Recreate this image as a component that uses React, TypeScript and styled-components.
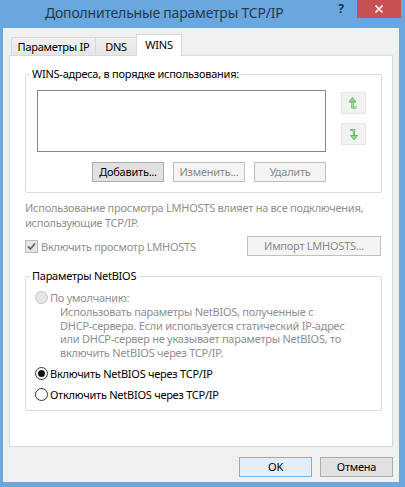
import React from "react";
import styled, { createGlobalStyle, css } from "styled-components";

const Global = createGlobalStyle`
  html, body { margin: 0; padding: 0; }
  body {
    background: #6aa7de;
    font-family: "Noto Sans", "Open Sans", sans-serif;
    font-size: 11px;
    letter-spacing: -0.25px;
    color: #000;
  }
  * { box-sizing: border-box; }
`;

const Window = styled.div`
  width: 405px;
  height: 487px;
  background: #6aa7de;
  display: flex;
  flex-direction: column;
`;

const TitleBar = styled.div`
  height: 28px;
  display: flex;
  align-items: flex-start;
`;

const Title = styled.div`
  flex: 1;
  padding-left: 45px;
  margin-top: 3px;
  font-size: 14px;
  letter-spacing: -0.2px;
  line-height: 20px;
  color: #233a52;
  white-space: nowrap;
`;

const HelpButton = styled.div`
  width: 10px;
  margin-top: 1px;
  margin-right: 11px;
  font-size: 12px;
  font-weight: 700;
  line-height: 16px;
  color: #1c3550;
  text-align: center;
`;

const CloseButton = styled.div`
  width: 44px;
  height: 18px;
  margin-right: 4px;
  background: #c75050;
  display: flex;
  align-items: center;
  justify-content: center;
`;

const Client = styled.div`
  height: 454px;
  margin: 0 6px 5px 3px;
  background: #f0f0f0;
  display: flex;
  flex-direction: column;
  padding: 6px 6px 0 6px;
`;

const TabStrip = styled.div`
  display: flex;
  align-items: flex-end;
  padding-left: 2px;
  margin-bottom: -1px;
  position: relative;
  z-index: 1;
`;

const Tab = styled.div<{ $active?: boolean; $w: number }>`
  width: ${(p) => p.$w}px;
  height: 18px;
  margin-bottom: 1px;
  border: 1px solid #d9d9d9;
  border-bottom: none;
  background: linear-gradient(#f0f0f0, #e5e5e5);
  line-height: 17px;
  text-align: center;
  white-space: nowrap;
  & + & {
    border-left: none;
  }
  ${(p) =>
    p.$active &&
    css`
      height: 22px;
      margin-bottom: 0;
      margin-left: -1px;
      background: #fff;
      border-left: 1px solid #d9d9d9 !important;
      line-height: 19px;
    `}
`;

const Panel = styled.div`
  height: 392px;
  background: #fff;
  border: 1px solid #d9d9d9;
  padding: 10px 10px 0 15px;
  display: flex;
  flex-direction: column;
`;

const Group = styled.fieldset`
  margin: 0;
  padding: 0;
  min-width: 0;
  border: 1px solid #dcdcdc;
  border-radius: 2px;
`;

const GroupLabel = styled.legend`
  margin-left: 4px;
  padding: 0 2px;
  line-height: 16px;
  white-space: nowrap;
`;

const WinsBody = styled.div`
  padding: 8px 10px 10px 11px;
`;

const ListRow = styled.div`
  display: flex;
  align-items: flex-start;
`;

const AddressList = styled.div`
  width: 289px;
  height: 62px;
  border: 1px solid #828790;
  background: #fff;
`;

const ArrowColumn = styled.div`
  margin-left: 15px;
  margin-top: 2px;
  display: flex;
  flex-direction: column;
  gap: 9px;
`;

const ArrowButton = styled.div`
  width: 25px;
  height: 22px;
  border: 1px solid #e6e6e6;
  background: #f2f2f2;
  display: flex;
  align-items: center;
  justify-content: center;
`;

const ButtonRow = styled.div<{ $w?: number; $mt?: number }>`
  display: flex;
  justify-content: flex-end;
  gap: ${(p) => (p.$w ? 9 : 8)}px;
  width: ${(p) => (p.$w ? `${p.$w}px` : "auto")};
  margin-top: ${(p) => p.$mt ?? 10}px;
`;

const Button = styled.div<{ $kind?: "normal" | "disabled" | "default"; $w?: number }>`
  width: ${(p) => p.$w ?? 72}px;
  height: 20px;
  border: 1px solid #adadad;
  background: #e1e1e1;
  line-height: 18px;
  text-align: center;
  white-space: nowrap;
  ${(p) =>
    p.$kind === "disabled" &&
    css`
      border-color: #bfbfbf;
      background: #f4f4f4;
      color: #8a8a8a;
    `}
  ${(p) =>
    p.$kind === "default" &&
    css`
      border-color: #7db0e2;
      background: #e6edf5;
    `}
`;

const Note = styled.div`
  margin-top: 7px;
  line-height: 15px;
  color: #8f8f8f;
  white-space: nowrap;
`;

const CheckRow = styled.div`
  margin-top: 6px;
  width: 356px;
  display: flex;
  align-items: center;
  justify-content: space-between;
`;

const CheckLabel = styled.label`
  display: flex;
  align-items: center;
  gap: 3px;
  color: #8f8f8f;
  white-space: nowrap;
`;

const CheckBox = styled.span`
  width: 13px;
  height: 13px;
  border: 1px solid #bcbcbc;
  background: #e6e6e6;
  display: flex;
  align-items: center;
  justify-content: center;
`;

const NetBiosGroup = styled(Group)`
  margin-top: 12px;
`;

const NetBiosBody = styled.div`
  padding: 5px 10px 8px 9px;
`;

const RadioRow = styled.div<{ $mt?: number; $disabled?: boolean }>`
  height: 16px;
  margin-top: ${(p) => p.$mt ?? 0}px;
  display: flex;
  align-items: center;
  gap: 2px;
  white-space: nowrap;
  color: ${(p) => (p.$disabled ? "#8f8f8f" : "#000")};
`;

const RadioCircle = styled.span<{ $checked?: boolean; $disabled?: boolean }>`
  width: 13px;
  height: 13px;
  border-radius: 50%;
  border: 1px solid #333;
  background: #fff;
  display: flex;
  align-items: center;
  justify-content: center;
  ${(p) =>
    p.$disabled &&
    css`
      border-color: #c4c4c4;
      background: #e6e6e6;
    `}
  &::after {
    content: "";
    width: 7px;
    height: 7px;
    border-radius: 50%;
    background: ${(p) => (p.$checked ? "#111" : "transparent")};
  }
`;

const Description = styled.div`
  padding-left: 25px;
  line-height: 13.5px;
  color: #8f8f8f;
  white-space: nowrap;
`;

const Footer = styled(ButtonRow)`
  padding-right: 0;
`;

const UpArrow = () => (
  <svg width="9" height="13" viewBox="0 0 9 13">
    <path d="M3.5 4.5 V10.5 H7.5" fill="none" stroke="#4fb14f" strokeWidth="2.2" />
    <path d="M3.5 4.5 V10.5 H7.5" fill="none" stroke="#a6e6a0" strokeWidth="0.9" />
    <path d="M0 5 L3.5 0.5 L7 5 Z" fill="#8fd98a" stroke="#4fb14f" strokeWidth="0.8" />
  </svg>
);

const DownArrow = () => (
  <svg width="9" height="13" viewBox="0 0 9 13">
    <path d="M1 2 H5 V8" fill="none" stroke="#4fb14f" strokeWidth="2.2" />
    <path d="M1 2 H5 V8" fill="none" stroke="#a6e6a0" strokeWidth="0.9" />
    <path d="M1.5 7.5 L5 12 L8.5 7.5 Z" fill="#8fd98a" stroke="#4fb14f" strokeWidth="0.8" />
  </svg>
);

const CloseGlyph = () => (
  <svg width="10" height="10" viewBox="0 0 10 10">
    <path d="M1.5 1.5 L8.5 8.5 M8.5 1.5 L1.5 8.5" stroke="#fff" strokeWidth="1.7" />
  </svg>
);

const CheckGlyph = () => (
  <svg width="9" height="9" viewBox="0 0 9 9">
    <path d="M1 4.5 L3.5 7 L8 1.5" fill="none" stroke="#666" strokeWidth="1.8" />
  </svg>
);

export default function App() {
  return (
    <>
      <Global />
      <Window>
        <TitleBar>
          <Title>Дополнительные параметры TCP/IP</Title>
          <HelpButton>?</HelpButton>
          <CloseButton>
            <CloseGlyph />
          </CloseButton>
        </TitleBar>
        <Client>
          <TabStrip>
            <Tab $w={85}>Параметры IP</Tab>
            <Tab $w={41}>DNS</Tab>
            <Tab $w={46} $active>
              WINS
            </Tab>
          </TabStrip>
          <Panel>
            <Group>
              <GroupLabel>WINS-адреса, в порядке использования:</GroupLabel>
              <WinsBody>
                <ListRow>
                  <AddressList />
                  <ArrowColumn>
                    <ArrowButton>
                      <UpArrow />
                    </ArrowButton>
                    <ArrowButton>
                      <DownArrow />
                    </ArrowButton>
                  </ArrowColumn>
                </ListRow>
                <ButtonRow $w={289}>
                  <Button>Добавить...</Button>
                  <Button $kind="disabled">Изменить...</Button>
                  <Button $kind="disabled">Удалить</Button>
                </ButtonRow>
              </WinsBody>
            </Group>
            <Note>
              Использование просмотра LMHOSTS влияет на все подключения,
              <br />
              использующие TCP/IP.
            </Note>
            <CheckRow>
              <CheckLabel>
                <CheckBox>
                  <CheckGlyph />
                </CheckBox>
                Включить просмотр LMHOSTS
              </CheckLabel>
              <Button $kind="disabled" $w={134}>
                Импорт LMHOSTS...
              </Button>
            </CheckRow>
            <NetBiosGroup>
              <GroupLabel>Параметры NetBIOS</GroupLabel>
              <NetBiosBody>
                <RadioRow $disabled>
                  <RadioCircle $disabled />
                  По умолчанию:
                </RadioRow>
                <Description>
                  Использовать параметры NetBIOS, полученные с
                  <br />
                  DHCP-сервера. Если используется статический IP-адрес
                  <br />
                  или DHCP-сервер не указывает параметры NetBIOS, то
                  <br />
                  включить NetBIOS через TCP/IP.
                </Description>
                <RadioRow $mt={6}>
                  <RadioCircle $checked />
                  Включить NetBIOS через TCP/IP
                </RadioRow>
                <RadioRow $mt={5}>
                  <RadioCircle />
                  Отключить NetBIOS через TCP/IP
                </RadioRow>
              </NetBiosBody>
            </NetBiosGroup>
          </Panel>
          <Footer>
            <Button $kind="default" $w={73}>
              OK
            </Button>
            <Button $w={73}>Отмена</Button>
          </Footer>
        </Client>
      </Window>
    </>
  );
}
